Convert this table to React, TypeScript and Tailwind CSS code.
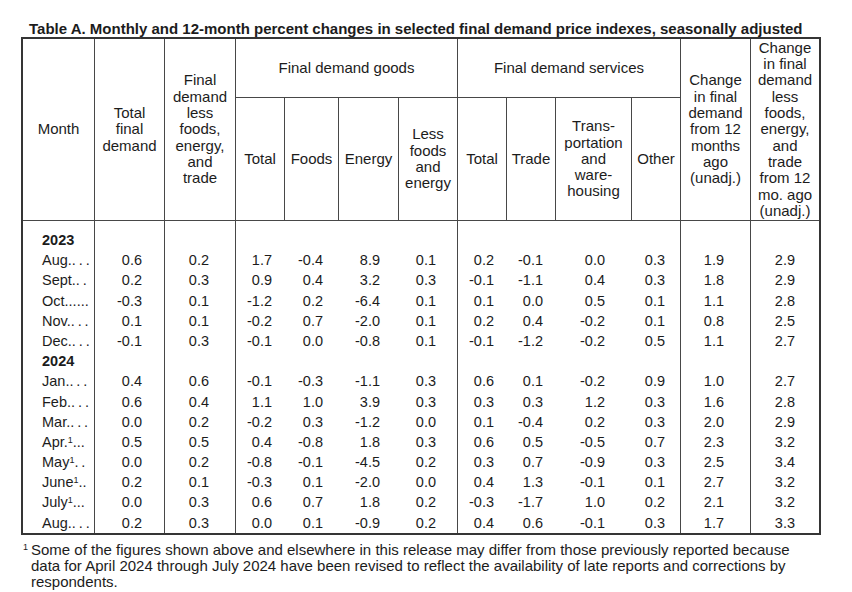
import React from "react";

const COLS =
  "grid grid-cols-[71px_70px_71px_49px_54px_60px_59px_49px_49px_76px_49px_70px_69px]";

const PR = [
  "pr-[22px]",
  "pr-[26px]",
  "pr-[12px]",
  "pr-[15px]",
  "pr-[18px]",
  "pr-[21px]",
  "pr-[12px]",
  "pr-[12px]",
  "pr-[26px]",
  "pr-[15px]",
  "pr-[26px]",
  "pr-[24px]",
];

// which value columns (0-based among 12 value columns) have a left rule in the body
const BODY_BORDER = [true, true, true, false, false, false, true, false, false, false, true, true];

const T = "\u2009";
const L3 = `.${T}.${T}.`;
const L2 = `.${T}.`;

type Row =
  | { year: string }
  | { label: string; sup?: boolean; lead: string; v: string[] };

const rows: Row[] = [
  { year: "2023" },
  { label: "Aug.", lead: L3, v: ["0.6", "0.2", "1.7", "-0.4", "8.9", "0.1", "0.2", "-0.1", "0.0", "0.3", "1.9", "2.9"] },
  { label: "Sept.", lead: L2, v: ["0.2", "0.3", "0.9", "0.4", "3.2", "0.3", "-0.1", "-1.1", "0.4", "0.3", "1.8", "2.9"] },
  { label: "Oct.", lead: ".....", v: ["-0.3", "0.1", "-1.2", "0.2", "-6.4", "0.1", "0.1", "0.0", "0.5", "0.1", "1.1", "2.8"] },
  { label: "Nov.", lead: L3, v: ["0.1", "0.1", "-0.2", "0.7", "-2.0", "0.1", "0.2", "0.4", "-0.2", "0.1", "0.8", "2.5"] },
  { label: "Dec.", lead: L3, v: ["-0.1", "0.3", "-0.1", "0.0", "-0.8", "0.1", "-0.1", "-1.2", "-0.2", "0.5", "1.1", "2.7"] },
  { year: "2024" },
  { label: "Jan.", lead: L3, v: ["0.4", "0.6", "-0.1", "-0.3", "-1.1", "0.3", "0.6", "0.1", "-0.2", "0.9", "1.0", "2.7"] },
  { label: "Feb.", lead: L3, v: ["0.6", "0.4", "1.1", "1.0", "3.9", "0.3", "0.3", "0.3", "1.2", "0.3", "1.6", "2.8"] },
  { label: "Mar.", lead: L3, v: ["0.0", "0.2", "-0.2", "0.3", "-1.2", "0.0", "0.1", "-0.4", "0.2", "0.3", "2.0", "2.9"] },
  { label: "Apr.", sup: true, lead: "...", v: ["0.5", "0.5", "0.4", "-0.8", "1.8", "0.3", "0.6", "0.5", "-0.5", "0.7", "2.3", "3.2"] },
  { label: "May", sup: true, lead: L2, v: ["0.0", "0.2", "-0.8", "-0.1", "-4.5", "0.2", "0.3", "0.7", "-0.9", "0.3", "2.5", "3.4"] },
  { label: "June", sup: true, lead: "..", v: ["0.2", "0.1", "-0.3", "0.1", "-2.0", "0.0", "0.4", "1.3", "-0.1", "0.1", "2.7", "3.2"] },
  { label: "July", sup: true, lead: "...", v: ["0.0", "0.3", "0.6", "0.7", "1.8", "0.2", "-0.3", "-1.7", "1.0", "0.2", "2.1", "3.2"] },
  { label: "Aug.", lead: L3, v: ["0.2", "0.3", "0.0", "0.1", "-0.9", "0.2", "0.4", "0.6", "-0.1", "0.3", "1.7", "3.3"] },
];

const LINE = "border-[#474747]";

function HeadCell({
  children,
  className = "",
}: {
  children: React.ReactNode;
  className?: string;
}) {
  return (
    <div
      className={`flex items-center justify-center text-center text-[15px] leading-[16.3px] ${className}`}
    >
      <div>{children}</div>
    </div>
  );
}

function Lines({ lines }: { lines: string[] }) {
  return (
    <>
      {lines.map((l, i) => (
        <div key={i} className="whitespace-nowrap">
          {l}
        </div>
      ))}
    </>
  );
}

export default function App() {
  return (
    <div className="w-[852px] h-[592px] bg-white text-[#1c1c1c] font-['Liberation_Sans',Arial,sans-serif] overflow-hidden">
      <div className="pt-[20px] pl-[29px] text-[15px] leading-[17px] font-bold whitespace-nowrap">
        Table A. Monthly and 12-month percent changes in selected final demand price indexes, seasonally adjusted
      </div>

      <div className="ml-[21px] w-[800px] border-2 border-[#353535]">
        {/* Header */}
        <div className={`${COLS} grid-rows-[59px_122px] border-b ${LINE}`}>
          <HeadCell className="col-start-1 row-start-1 row-span-2">Month</HeadCell>
          <HeadCell className={`col-start-2 row-start-1 row-span-2 border-l ${LINE}`}>
            <Lines lines={["Total", "final", "demand"]} />
          </HeadCell>
          <HeadCell className={`col-start-3 row-start-1 row-span-2 border-l ${LINE}`}>
            <Lines lines={["Final", "demand", "less", "foods,", "energy,", "and", "trade"]} />
          </HeadCell>
          <HeadCell className={`col-start-4 col-span-4 row-start-1 border-l border-b ${LINE}`}>
            Final demand goods
          </HeadCell>
          <HeadCell className={`col-start-8 col-span-4 row-start-1 border-l border-b ${LINE}`}>
            Final demand services
          </HeadCell>
          <HeadCell className={`col-start-12 row-start-1 row-span-2 border-l ${LINE}`}>
            <Lines lines={["Change", "in final", "demand", "from 12", "months", "ago", "(unadj.)"]} />
          </HeadCell>
          <HeadCell className={`col-start-13 row-start-1 row-span-2 border-l ${LINE}`}>
            <Lines
              lines={[
                "Change",
                "in final",
                "demand",
                "less",
                "foods,",
                "energy,",
                "and",
                "trade",
                "from 12",
                "mo. ago",
                "(unadj.)",
              ]}
            />
          </HeadCell>
          <HeadCell className={`col-start-4 row-start-2 border-l ${LINE}`}>Total</HeadCell>
          <HeadCell className={`col-start-5 row-start-2 border-l ${LINE}`}>Foods</HeadCell>
          <HeadCell className={`col-start-6 row-start-2 border-l ${LINE}`}>Energy</HeadCell>
          <HeadCell className={`col-start-7 row-start-2 border-l ${LINE}`}>
            <Lines lines={["Less", "foods", "and", "energy"]} />
          </HeadCell>
          <HeadCell className={`col-start-8 row-start-2 border-l ${LINE}`}>Total</HeadCell>
          <HeadCell className={`col-start-9 row-start-2 border-l ${LINE}`}>Trade</HeadCell>
          <HeadCell className={`col-start-10 row-start-2 border-l ${LINE}`}>
            <Lines lines={["Trans-", "portation", "and", "ware-", "housing"]} />
          </HeadCell>
          <HeadCell className={`col-start-11 row-start-2 border-l ${LINE}`}>Other</HeadCell>
        </div>

        {/* Body */}
        <div className={`${COLS} text-[14.5px]`}>
          {/* spacer row */}
          <div className="h-[9px]" />
          {BODY_BORDER.map((b, i) => (
            <div key={`sp${i}`} className={`h-[9px] ${b ? `border-l ${LINE}` : ""}`} />
          ))}

          {rows.map((r, ri) => {
            const cells: React.ReactNode[] = [];
            if ("year" in r) {
              cells.push(
                <div key="m" className="h-[20.2px] leading-[20.2px] pl-[19px] font-bold">
                  {r.year}
                </div>
              );
              BODY_BORDER.forEach((b, i) =>
                cells.push(
                  <div key={i} className={`h-[20.2px] ${b ? `border-l ${LINE}` : ""}`} />
                )
              );
            } else {
              cells.push(
                <div
                  key="m"
                  className="h-[20.2px] leading-[20.2px] pl-[19px] whitespace-nowrap"
                >
                  {r.label}
                  {r.sup && (
                    <sup className="text-[9px] relative -top-[4px]">1</sup>
                  )}
                  {r.lead}
                </div>
              );
              r.v.forEach((val, i) =>
                cells.push(
                  <div
                    key={i}
                    className={`h-[20.2px] leading-[20.2px] text-right ${PR[i]} ${
                      BODY_BORDER[i] ? `border-l ${LINE}` : ""
                    }`}
                  >
                    {val}
                  </div>
                )
              );
            }
            return <React.Fragment key={ri}>{cells}</React.Fragment>;
          })}
        </div>
      </div>

      {/* Footnote */}
      <div className="mt-[7px] ml-[23px] flex text-[15px] leading-[16px]">
        <span className="w-[8px] shrink-0 text-[9px] leading-[10px]">1</span>
        <p className="w-[772px]">
          Some of the figures shown above and elsewhere in this release may differ from those
          previously reported because data for April 2024 through July 2024 have been revised to
          reflect the availability of late reports and corrections by respondents.
        </p>
      </div>
    </div>
  );
}
